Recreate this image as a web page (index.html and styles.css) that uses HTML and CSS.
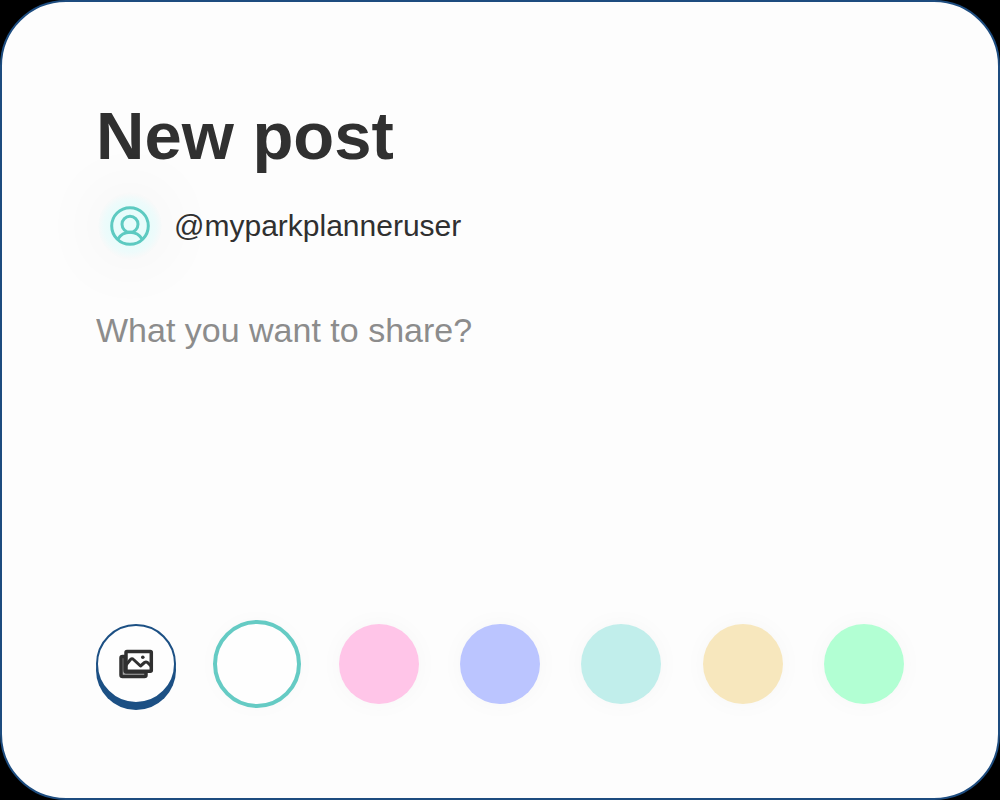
FILE: index.html
```html
<!DOCTYPE html>
<html lang="en">
<head>
<meta charset="utf-8">
<meta name="viewport" content="width=device-width, initial-scale=1">
<title>New post</title>
<link rel="stylesheet" href="styles.css">
</head>
<body>
<main class="card">
  <form class="composer">
    <h1 class="title">New post</h1>
    <div class="author">
      <span class="avatar">
        <svg class="avatar-icon" viewBox="0 0 40 40" aria-hidden="true">
          <circle cx="20" cy="20" r="18.3"/>
          <circle cx="20" cy="18.3" r="8"/>
          <path d="M7.500 33.500Q12 26.300 20 26.300T32.500 33.500"/>
        </svg>
      </span>
      <span class="handle">@myparkplanneruser</span>
    </div>
    <textarea class="message" aria-label="Post text" placeholder="What you want to share?"></textarea>
    <div class="tools" role="group" aria-label="Post options">
      <button class="photo" type="button" aria-label="Add pictures">
        <svg class="photo-icon" viewBox="0 0 36 32" aria-hidden="true">
          <path class="back" d="M7 8.500H4.500Q3 8.500 3 10V27Q3 28.500 4.500 28.500H26.500Q28 28.500 28 27V24H8Q7 24 7 22Z"/>
          <rect class="front" x="8" y="3.500" width="25.300" height="19.800" rx="1"/>
          <path class="hills" d="M8 17L12.500 11.500Q14 10 15.500 11.500L22.500 18L26.500 14.500Q28 13.500 29.500 14.500L33 18"/>
          <circle class="sun" cx="24.800" cy="9.200" r="1.800"/>
        </svg>
      </button>
      <input class="swatch white" type="radio" name="color" value="white" aria-label="White" checked>
      <input class="swatch pink" type="radio" name="color" value="pink" aria-label="Pink">
      <input class="swatch blue" type="radio" name="color" value="blue" aria-label="Blue">
      <input class="swatch teal" type="radio" name="color" value="teal" aria-label="Teal">
      <input class="swatch sand" type="radio" name="color" value="sand" aria-label="Sand">
      <input class="swatch green" type="radio" name="color" value="green" aria-label="Green">
    </div>
  </form>
</main>
</body>
</html>
```

FILE: styles.css
```css
* {
  box-sizing: border-box;
}

body {
  margin: 0;
  background: #000;
  color: #303030;
  font-family: "Liberation Sans", Arial, sans-serif;
}

.card {
  display: flex;
  min-height: 100vh;
  padding: 94px;
  border: 2px solid #1d4c7f;
  border-radius: 66px;
  background: #fdfdfd;
}

.composer {
  display: flex;
  flex: 1;
  flex-direction: column;
  min-width: 0;
}

.title {
  margin: 0;
  font-size: 67px;
  line-height: 80px;
}

.author {
  display: flex;
  align-items: center;
  gap: 12px;
  margin-top: 16px;
  padding-left: 2px;
}

.avatar {
  display: flex;
  align-items: center;
  justify-content: center;
  width: 64px;
  height: 68px;
  border-radius: 50%;
  background: radial-gradient(circle, #e8fcfb 40%, #eefbfb 56%, #f9f9f9 70%);
  box-shadow: 0 0 72px rgba(0, 0, 0, 0.06);
}

.avatar-icon {
  width: 40px;
  height: 40px;
  fill: none;
  stroke: #5dcac1;
  stroke-width: 3;
}

.handle {
  font-size: 30px;
  line-height: 40px;
}

.message {
  flex: 1;
  width: 100%;
  min-height: 120px;
  margin: 46px 0 32px;
  padding: 0;
  border: 0;
  outline: 0;
  background: transparent;
  color: inherit;
  font-family: inherit;
  font-size: 34px;
  line-height: 48px;
  resize: none;
}

.message::placeholder {
  color: #8c8c8c;
  opacity: 1;
}

.tools {
  display: flex;
  flex-wrap: wrap;
  justify-content: space-between;
  gap: 16px;
}

.photo,
.swatch {
  flex: none;
  width: 80px;
  height: 80px;
  margin: 0;
  border-radius: 50%;
  cursor: pointer;
}

.photo {
  display: flex;
  align-items: center;
  justify-content: center;
  padding: 0;
  border: 2px solid #1c5084;
  background: #fefefe;
  box-shadow: 0 6px #1c5084;
}

.photo-icon {
  width: 36px;
  height: 32px;
  fill: none;
  stroke: #303030;
  stroke-width: 3.5;
  stroke-linecap: round;
  stroke-linejoin: round;
}

.back {
  fill: #a8a8a8;
}

.front {
  fill: #fefefe;
}

.hills {
  stroke-width: 3;
}

.sun {
  fill: #303030;
  stroke: none;
}

.swatch {
  appearance: none;
  box-shadow: 0 0 24px rgba(0, 0, 0, 0.03);
}

.swatch:checked {
  outline: 4px solid #65cbc4;
}

.white {
  background: #fefefe;
}

.pink {
  background: #ffc5e8;
}

.blue {
  background: #bbc5ff;
}

.teal {
  background: #c1eeeb;
}

.sand {
  background: #f7e7bd;
}

.green {
  background: #b2ffd3;
}
```
